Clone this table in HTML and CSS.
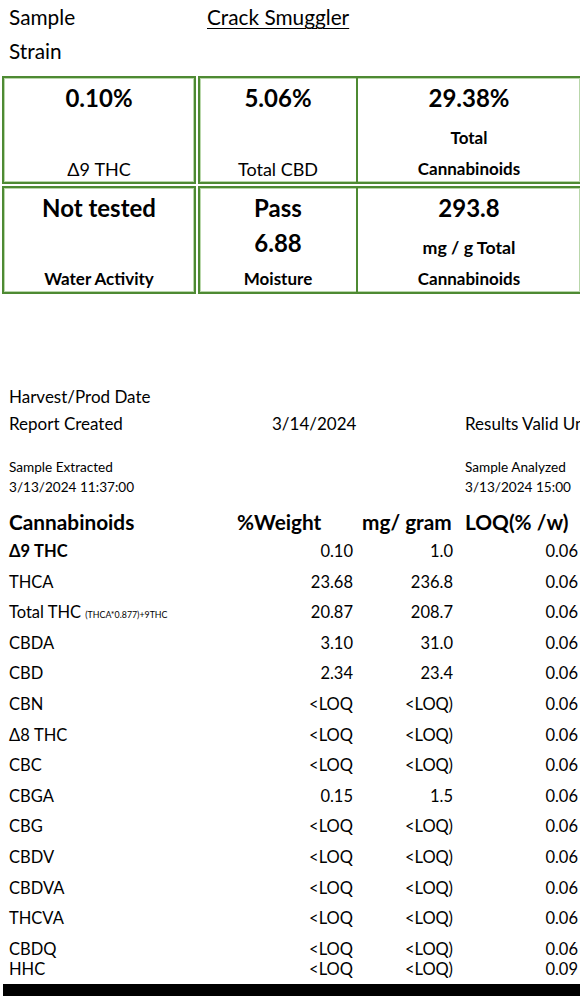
FILE: index.html
```html
<!DOCTYPE html>
<html lang="en">
<head>
<meta charset="utf-8">
<title>Crack Smuggler - Certificate of Analysis</title>
<link rel="stylesheet" href="styles.css">
</head>
<body>
<div class="page">
  <div class="meta-top">
    <div class="kv"><span class="k">Sample</span><span class="v underline">Crack Smuggler</span></div>
    <div class="kv"><span class="k">Strain</span><span class="v"></span></div>
  </div>

  <div class="summary">
    <div class="srow">
      <div class="box box1">
        <div class="cell">
          <div class="big">0.10%</div>
          <div class="lbl">&#916;9 THC</div>
        </div>
      </div>
      <div class="box group">
        <div class="cell c2">
          <div class="big">5.06%</div>
          <div class="lbl">Total CBD</div>
        </div>
        <div class="cell c3">
          <div class="big">29.38%</div>
          <div class="lbl-group">
            <div class="lbl bold">Total</div>
            <div class="lbl bold">Cannabinoids</div>
          </div>
        </div>
      </div>
    </div>
    <div class="srow">
      <div class="box box1">
        <div class="cell">
          <div class="big">Not tested</div>
          <div class="lbl bold">Water Activity</div>
        </div>
      </div>
      <div class="box group">
        <div class="cell c2">
          <div class="big">Pass</div>
          <div class="mid big-mid">6.88</div>
          <div class="lbl bold">Moisture</div>
        </div>
        <div class="cell c3">
          <div class="big">293.8</div>
          <div class="mid mg">mg / g Total</div>
          <div class="lbl bold">Cannabinoids</div>
        </div>
      </div>
    </div>
  </div>

  <div class="info">
    <div class="info-row"><span>Harvest/Prod Date</span><span></span><span></span></div>
    <div class="info-row"><span>Report Created</span><span>3/14/2024</span><span class="clip">Results Valid Until</span></div>
  </div>

  <div class="stamps">
    <div class="stamp">Sample Extracted<br>3/13/2024 11:37:00</div>
    <div></div>
    <div class="stamp">Sample Analyzed<br>3/13/2024 15:00</div>
  </div>

  <div class="results">
    <div class="rrow head">
      <span>Cannabinoids</span>
      <span class="h2">%Weight</span>
      <span class="h3">mg/ gram</span>
      <span class="h4">LOQ(% /w)</span>
    </div>
    <div class="rrow"><span class="name bold">&#916;9 THC</span><span class="num">0.10</span><span class="num">1.0</span><span class="num">0.06</span></div>
    <div class="rrow"><span class="name">THCA</span><span class="num">23.68</span><span class="num">236.8</span><span class="num">0.06</span></div>
    <div class="rrow"><span class="name">Total THC <small class="formula">(THCA*0.877)+9THC</small></span><span class="num">20.87</span><span class="num">208.7</span><span class="num">0.06</span></div>
    <div class="rrow"><span class="name">CBDA</span><span class="num">3.10</span><span class="num">31.0</span><span class="num">0.06</span></div>
    <div class="rrow"><span class="name">CBD</span><span class="num">2.34</span><span class="num">23.4</span><span class="num">0.06</span></div>
    <div class="rrow"><span class="name">CBN</span><span class="num">&lt;LOQ</span><span class="num">&lt;LOQ)</span><span class="num">0.06</span></div>
    <div class="rrow"><span class="name">&#916;8 THC</span><span class="num">&lt;LOQ</span><span class="num">&lt;LOQ)</span><span class="num">0.06</span></div>
    <div class="rrow"><span class="name">CBC</span><span class="num">&lt;LOQ</span><span class="num">&lt;LOQ)</span><span class="num">0.06</span></div>
    <div class="rrow"><span class="name">CBGA</span><span class="num">0.15</span><span class="num">1.5</span><span class="num">0.06</span></div>
    <div class="rrow"><span class="name">CBG</span><span class="num">&lt;LOQ</span><span class="num">&lt;LOQ)</span><span class="num">0.06</span></div>
    <div class="rrow"><span class="name">CBDV</span><span class="num">&lt;LOQ</span><span class="num">&lt;LOQ)</span><span class="num">0.06</span></div>
    <div class="rrow"><span class="name">CBDVA</span><span class="num">&lt;LOQ</span><span class="num">&lt;LOQ)</span><span class="num">0.06</span></div>
    <div class="rrow"><span class="name">THCVA</span><span class="num">&lt;LOQ</span><span class="num">&lt;LOQ)</span><span class="num">0.06</span></div>
    <div class="rrow"><span class="name">CBDQ</span><span class="num">&lt;LOQ</span><span class="num">&lt;LOQ)</span><span class="num">0.06</span></div>
    <div class="rrow last"><span class="name">HHC</span><span class="num">&lt;LOQ</span><span class="num">&lt;LOQ)</span><span class="num">0.09</span></div>
  </div>

  <div class="rule"></div>
</div>
</body>
</html>
```

FILE: styles.css
```css
html, body {
  margin: 0;
  padding: 0;
  overflow: hidden;
  background: #ffffff;
}

body {
  font-family: "Lato", "Open Sans", sans-serif;
  color: #000000;
  width: 580px;
}

.page {
  width: 580px;
  overflow: hidden;
}

.bold { font-weight: 700; }

/* top key/value lines */
.meta-top {
  padding-left: 9px;
}
.kv {
  display: flex;
  height: 34px;
  line-height: 34px;
  font-size: 20.8px;
}
.kv .k {
  width: 198px;
  flex: none;
}
.underline {
  text-decoration: underline;
  text-underline-offset: 3px;
  text-decoration-thickness: 1px;
}

/* summary boxes */
.summary {
  margin-top: 8px;
  display: flex;
  flex-direction: column;
  gap: 2px;
}
.srow {
  display: flex;
  gap: 2px;
  margin-left: 2px;
  height: 108px;
}
.box {
  box-sizing: border-box;
  border: 2px solid #4e8a33;
  box-shadow: inset 0 0 0 1px #b9d7ab;
}
.box1 {
  width: 194px;
  flex: none;
  display: flex;
}
.group {
  flex: 1;
  display: flex;
  border-right: none;
}
.cell {
  flex: 1;
  display: flex;
  flex-direction: column;
  align-items: center;
  text-align: center;
  white-space: nowrap;
}
.c2 {
  flex: none;
  width: 156px;
}
.c3 {
  border-left: 2px solid #4e8a33;
}
.big {
  height: 40px;
  line-height: 40px;
  font-size: 24px;
  font-weight: 700;
}
.mid {
  font-weight: 700;
}
.big-mid {
  height: 30px;
  line-height: 30px;
  font-size: 24px;
}
.mg {
  height: 38px;
  line-height: 38px;
  font-size: 17.8px;
}
.lbl {
  margin-top: auto;
  height: 26px;
  line-height: 26px;
  font-size: 18px;
}
.lbl.bold {
  font-size: 17px;
}
.lbl-group {
  margin-top: auto;
  display: flex;
  flex-direction: column;
  align-items: center;
  gap: 5px;
}
.lbl-group .lbl {
  margin-top: 0;
}

/* info lines */
.info {
  margin-top: 88.5px;
}
.info-row {
  display: grid;
  grid-template-columns: 263px 193px 1fr;
  padding-left: 9px;
  height: 27px;
  line-height: 27px;
  font-size: 17px;
  white-space: nowrap;
}
.clip {
  overflow: hidden;
}

.stamps {
  margin-top: 20.5px;
  display: grid;
  grid-template-columns: 263px 193px 1fr;
  padding-left: 9px;
  font-size: 13.6px;
  line-height: 20px;
  white-space: nowrap;
}

/* results table */
.results {
  margin-top: 11px;
}
.rrow {
  display: grid;
  grid-template-columns: 228px 116px 100px 125px;
  padding-left: 9px;
  height: 30.6px;
  line-height: 30.6px;
  font-size: 16.5px;
  white-space: nowrap;
}
.rrow.head {
  height: 28px;
  line-height: 28px;
  font-size: 20.8px;
  font-weight: 700;
}
.rrow.head .h3 { padding-left: 9px; }
.rrow.head .h4 { padding-left: 12px; }
.rrow.last {
  height: 11px;
  line-height: 11px;
}
.num {
  text-align: right;
}
.formula {
  font-size: 8.8px;
}

.rule {
  margin-top: 9px;
  margin-left: 3px;
  height: 12px;
  background: #000000;
}
```
